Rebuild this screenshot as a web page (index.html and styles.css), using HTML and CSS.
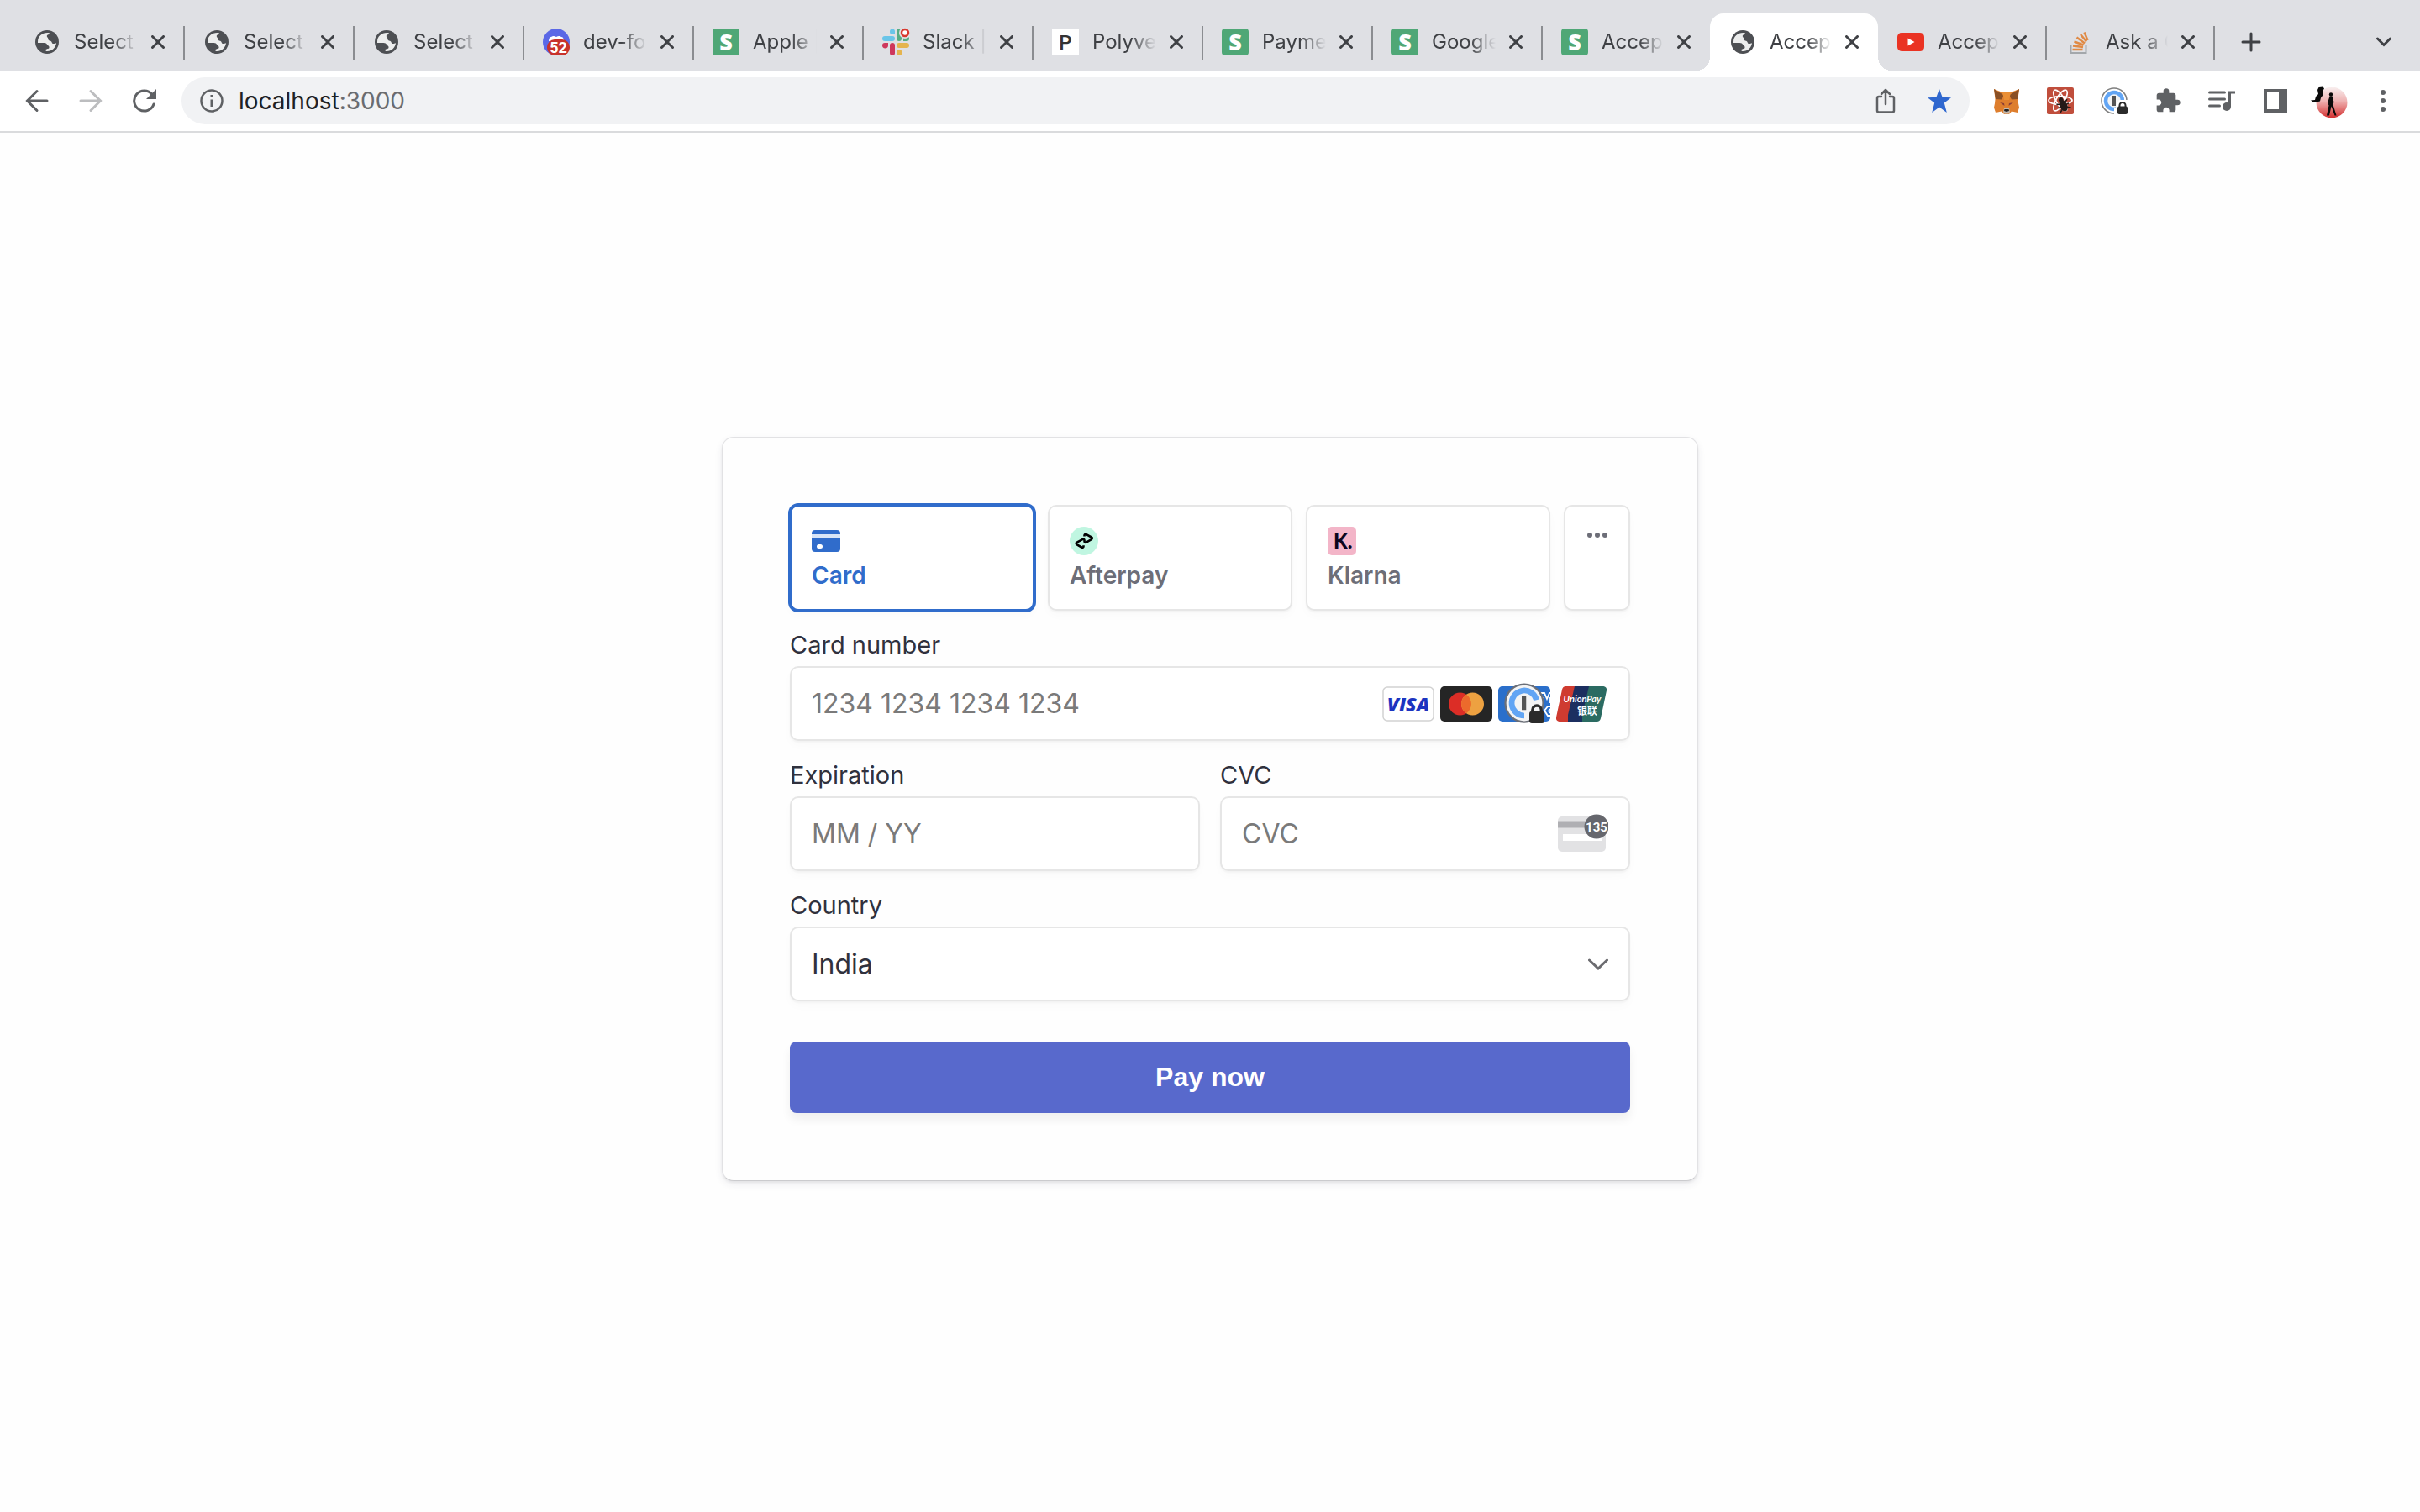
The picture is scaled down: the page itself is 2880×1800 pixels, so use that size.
FILE: index.html
```html
<!DOCTYPE html>
<html lang="en">
<head>
  <meta charset="UTF-8" />
  <meta name="viewport" content="width=device-width, initial-scale=1.0" />
  <title>Accept a payment</title>
  <link rel="stylesheet" href="styles.css">
</head>
<body>
  <!-- shared icons -->
  <svg class="defs" aria-hidden="true">
    <symbol id="globe" viewBox="0 0 28 28">
      <circle cx="14" cy="14" r="14" fill="#4d4f53"/>
      <path d="M3 13.500C3 7.500 8 3 14.500 3c1.500 0 2.500.3 2.500.8-.3 1.500-3 1.200-3.200 3.200-.1 1.500 1.500 1.700 1.500 3.200 0 1.300 1.200 2.200 2.700 2.600 2 .5 1.300 2.700 3 3.200 1.500.4 2.800-.8 4-.8-.6 5.500-5.200 9.800-10.800 9.800-1.300 0-2.200-.6-2-1.500.4-1.500 3.800-.6 4.300-2.700.5-2-1.500-2.500-2.300-3.800-.7-1.200-1.800-2-3.700-2H3z" fill="#eceded"/>
    </symbol>
    <symbol id="close" viewBox="0 0 16 16">
      <path d="M1.500 1.500l13 13M14.500 1.500l-13 13" stroke="#3f4145" stroke-width="3" stroke-linecap="round"/>
    </symbol>
    <symbol id="stripe" viewBox="0 0 32 32">
      <rect width="32" height="32" rx="4" fill="#4fa776"/>
      <text x="16" y="26" text-anchor="middle" font-family="Open Sans, sans-serif" font-weight="800" font-size="27" fill="#fff">S</text>
    </symbol>
    <symbol id="onepassword" viewBox="0 0 32 32">
      <circle cx="16" cy="16" r="15" fill="#fff" stroke="#7f7f7f" stroke-width="1.500"/>
      <circle cx="16" cy="16" r="10" fill="#f4f4f4" stroke="#62a5f4" stroke-width="4.500"/>
      <rect x="14" y="10" width="4" height="12" fill="#555"/>
      <path d="M16 24h2c0-3 1-5 3-7l1-2h10v17H16z" fill="#fff"/>
      <path d="M22.500 24v-2.500a3.500 3.500 0 0 1 7 0V24" fill="none" stroke="#2b2b2b" stroke-width="2"/>
      <rect x="20" y="22.500" width="12" height="9.500" rx="2" fill="#2b2b2b"/>
    </symbol>
    <!-- same mark without the white backing behind the lock, for use over a card logo -->
    <symbol id="onepassword-badge" viewBox="0 0 32 32">
      <circle cx="16" cy="16" r="15" fill="#f4f4f4" stroke="#6b6f78" stroke-width="1.500"/>
      <path d="M16 26a10 10 0 1 1 9.700-12.500" fill="none" stroke="#62a5f4" stroke-width="4.500"/>
      <rect x="14" y="10.500" width="3.500" height="11" fill="#555"/>
      <path d="M22.500 24v-2.500a3.500 3.500 0 0 1 7 0V24" fill="none" stroke="#2b2b2b" stroke-width="2.200"/>
      <rect x="20" y="22.500" width="12" height="9.500" rx="2" fill="#2b2b2b"/>
    </symbol>
  </svg>

  <header class="browser">
    <div class="tab-strip">
      <div class="tab">
        <svg class="favicon small"><use href="#globe"/></svg>
        <span class="tab-title">Select</span>
        <button class="tab-close" aria-label="Close tab"><svg><use href="#close"/></svg></button>
      </div>
      <div class="tab">
        <svg class="favicon small"><use href="#globe"/></svg>
        <span class="tab-title">Select</span>
        <button class="tab-close" aria-label="Close tab"><svg><use href="#close"/></svg></button>
      </div>
      <div class="tab">
        <svg class="favicon small"><use href="#globe"/></svg>
        <span class="tab-title">Select</span>
        <button class="tab-close" aria-label="Close tab"><svg><use href="#close"/></svg></button>
      </div>
      <div class="tab">
        <svg class="favicon" viewBox="0 0 32 32">
          <circle cx="16" cy="16" r="16" fill="#5b68e6"/>
          <path d="M7 15c0-3 1-5 3-5 2-1.500 4-1 6 0 2-1 4-1.500 6 0 2 0 3 2 3 5z" fill="#fff"/>
          <rect x="5" y="13" width="27" height="19" rx="9" fill="#c8322b"/>
          <text x="18.500" y="29" text-anchor="middle" font-family="Roboto, sans-serif" font-weight="700" font-size="18" fill="#fff">52</text>
        </svg>
        <span class="tab-title">dev-fo</span>
        <button class="tab-close" aria-label="Close tab"><svg><use href="#close"/></svg></button>
      </div>
      <div class="tab">
        <svg class="favicon"><use href="#stripe"/></svg>
        <span class="tab-title">Apple |</span>
        <button class="tab-close" aria-label="Close tab"><svg><use href="#close"/></svg></button>
      </div>
      <div class="tab">
        <svg class="favicon" viewBox="0 0 32 32">
          <g fill="#6ac5e8"><path d="M9 3.500a3 3 0 0 1 6 0V7h-3a3.300 3.300 0 0 1-3-3.500z"/><rect y="9" width="15" height="6" rx="3"/></g>
          <g fill="#56ad83"><rect x="17" width="6" height="15" rx="3"/><path d="M25 15v-3a3.300 3.300 0 0 1 7 0 3 3 0 0 1-3 3z"/></g>
          <g fill="#e5b44e"><rect x="17" y="17" width="15" height="6" rx="3"/><path d="M17 25h3a3.300 3.300 0 0 1 0 7 3 3 0 0 1-3-3z"/></g>
          <g fill="#ce375c"><rect x="9" y="17" width="6" height="15" rx="3"/><path d="M7 17v3a3.300 3.300 0 0 1-7 0 3 3 0 0 1 3-3z"/></g>
          <circle cx="27" cy="5" r="7" fill="#dfe0e4"/>
          <circle cx="27" cy="5" r="4" fill="#fff" stroke="#d8392f" stroke-width="2.500"/>
        </svg>
        <span class="tab-title">Slack |</span>
        <button class="tab-close" aria-label="Close tab"><svg><use href="#close"/></svg></button>
      </div>
      <div class="tab">
        <svg class="favicon" viewBox="0 0 32 32">
          <rect width="32" height="32" fill="#fff"/>
          <text x="16" y="25" text-anchor="middle" font-family="Roboto, sans-serif" font-weight="500" font-size="24" fill="#333">P</text>
        </svg>
        <span class="tab-title">Polyve</span>
        <button class="tab-close" aria-label="Close tab"><svg><use href="#close"/></svg></button>
      </div>
      <div class="tab">
        <svg class="favicon"><use href="#stripe"/></svg>
        <span class="tab-title">Payme</span>
        <button class="tab-close" aria-label="Close tab"><svg><use href="#close"/></svg></button>
      </div>
      <div class="tab">
        <svg class="favicon"><use href="#stripe"/></svg>
        <span class="tab-title">Google</span>
        <button class="tab-close" aria-label="Close tab"><svg><use href="#close"/></svg></button>
      </div>
      <div class="tab narrow no-line">
        <svg class="favicon"><use href="#stripe"/></svg>
        <span class="tab-title">Accep</span>
        <button class="tab-close" aria-label="Close tab"><svg><use href="#close"/></svg></button>
      </div>
      <div class="tab narrow active">
        <svg class="favicon small"><use href="#globe"/></svg>
        <span class="tab-title">Accep</span>
        <button class="tab-close" aria-label="Close tab"><svg><use href="#close"/></svg></button>
      </div>
      <div class="tab narrow">
        <svg class="favicon" viewBox="0 0 32 32">
          <rect y="5" width="32" height="22" rx="5" fill="#ea3323"/>
          <path d="M12.500 11.500v9l8-4.500z" fill="#fff"/>
        </svg>
        <span class="tab-title">Accep</span>
        <button class="tab-close" aria-label="Close tab"><svg><use href="#close"/></svg></button>
      </div>
      <div class="tab narrow">
        <svg class="favicon" viewBox="0 0 32 32" fill="none">
          <path d="M6.500 20v9h18v-9" stroke="#a3a7ab" stroke-width="2"/>
          <path d="M9.500 25h12M10 20.500l12 1.500M11.500 15.500l11 4M14.500 10.500l9.500 7M19 7l7 8.500M23.500 4.500l4 9.500" transform="translate(-1)" stroke="#e08a45" stroke-width="2.500"/>
        </svg>
        <span class="tab-title">Ask a Q</span>
        <button class="tab-close" aria-label="Close tab"><svg><use href="#close"/></svg></button>
      </div>
      <button class="new-tab" aria-label="New tab">
        <svg width="24" height="24" viewBox="0 0 24 24"><path d="M12 2v20M2 12h20" stroke="#3f4145" stroke-width="3" stroke-linecap="round"/></svg>
      </button>
      <button class="tab-search" aria-label="Search tabs">
        <svg width="18" height="12" viewBox="0 0 18 12" fill="none"><path d="M1.500 2L9 9.500 16.500 2" stroke="#3f4145" stroke-width="3" stroke-linecap="round"/></svg>
      </button>
    </div>

    <div class="toolbar">
      <div class="nav-buttons">
        <button aria-label="Back"><svg width="28" height="28" viewBox="0 0 28 28" fill="none" stroke="#5f6164" stroke-width="3" stroke-linecap="round"><path d="M26 14H3M14 2.500L2.500 14 14 25.500"/></svg></button>
        <button aria-label="Forward"><svg width="28" height="28" viewBox="0 0 28 28" fill="none" stroke="#bcbdbf" stroke-width="3" stroke-linecap="round"><path d="M2 14h23M14 2.500L25.500 14 14 25.500"/></svg></button>
        <button aria-label="Reload"><svg width="28" height="28" viewBox="0 0 28 28" fill="none"><path d="M23 6.500A12 12 0 1 0 25 18" stroke="#5f6164" stroke-width="3" stroke-linecap="round"/><path d="M28 0v12H16z" fill="#5f6164"/></svg></button>
      </div>
      <div class="omnibox">
        <svg width="28" height="28" viewBox="0 0 28 28"><circle cx="14" cy="14" r="12.500" fill="none" stroke="#5f6164" stroke-width="2.500"/><path d="M12.500 12.500h3V21h-3zM12.500 7h3v3h-3z" fill="#5f6164"/></svg>
        <span class="url">localhost<span class="port">:3000</span></span>
        <button aria-label="Share"><svg width="28" height="30" viewBox="0 0 28 30" fill="none" stroke="#5f6164" stroke-width="2.500" stroke-linecap="round" stroke-linejoin="round"><path d="M9 10H6a2 2 0 0 0-2 2v14.500a2 2 0 0 0 2 2h16a2 2 0 0 0 2-2V12a2 2 0 0 0-2-2h-3M14 19V2.500M9 7l5-5 5 5"/></svg></button>
        <button aria-label="Bookmark"><svg width="28" height="28" viewBox="0 0 28 28"><path d="M14 0l3.600 9.800L28 10.200l-8.200 6.400L22.800 28 14 21.500 5.200 28l3-11.400L0 10.200l10.400-.4z" fill="#2f67cf"/></svg></button>
      </div>
      <div class="extensions">
        <button aria-label="MetaMask"><svg width="32" height="32" viewBox="0 0 32 32">
          <path d="M1 2l10 4h10l10-4-1.500 12 .5 5 1 5-2 6-7-1.500-3 3.500h-6l-3-3.500L3 30l-2-6 1-5 .5-5z" fill="#de7e2d"/>
          <path d="M1 2l12 7.500-3 5-7-.5zM31 2L19 9.500l3 5 7-.5z" fill="#8a4f24"/>
          <path d="M11 6h10l-2 9h-6z" fill="#ea8f35"/>
          <path d="M8 18l5 1 .5 3zM24 18l-5 1-.500 3z" fill="#8c3f36"/>
          <path d="M13 25h6l1 4-1.500 2.500h-5L12 29z" fill="#c3b8ad"/>
          <path d="M13.500 26h5l.5 2-3 1-3-1z" fill="#222"/>
        </svg></button>
        <button aria-label="React Developer Tools"><svg width="32" height="32" viewBox="0 0 32 32">
          <rect width="32" height="32" rx="2" fill="#c04e3c"/>
          <g fill="none" stroke="#fff" stroke-width="1.700"><ellipse cx="16" cy="15.500" rx="14" ry="5"/><ellipse cx="16" cy="15.500" rx="14" ry="5" transform="rotate(60 16 15.500)"/><ellipse cx="16" cy="15.500" rx="14" ry="5" transform="rotate(120 16 15.500)"/></g>
          <g transform="rotate(-25 19 20)"><ellipse cx="19" cy="22" rx="4.500" ry="7" fill="#241a18"/><circle cx="19" cy="14.500" r="2.800" fill="#241a18"/><path d="M12 17l4 2h6l4-2M12 22h14M12 28l4-3h6l4 3" fill="none" stroke="#241a18" stroke-width="1.600"/></g>
        </svg></button>
        <button aria-label="1Password"><svg width="32" height="32"><use href="#onepassword"/></svg></button>
        <button aria-label="Extensions"><svg width="32" height="32" viewBox="0 0 24 24"><path d="M20.500 11H19V7c0-1.100-.9-2-2-2h-4V3.500a2.500 2.500 0 0 0-5 0V5H4c-1.100 0-1.990.9-1.990 2v3.800H3.500c1.490 0 2.700 1.210 2.700 2.700s-1.210 2.700-2.700 2.700H2V20c0 1.100.9 2 2 2h3.800v-1.500c0-1.490 1.210-2.700 2.700-2.700 1.490 0 2.700 1.210 2.700 2.700V22H17c1.100 0 2-.9 2-2v-4h1.500a2.500 2.500 0 0 0 0-5z" fill="#5f6164"/></svg></button>
        <button aria-label="Media controls"><svg width="32" height="32" viewBox="0 0 32 32" fill="none"><path d="M1.500 6h18M1.500 14h18M1.500 22h12" stroke="#5f6164" stroke-width="3" stroke-linecap="round"/><circle cx="22" cy="23" r="5" fill="#5f6164"/><path d="M25.500 23V6h6.500" stroke="#5f6164" stroke-width="3"/></svg></button>
        <button aria-label="Side panel"><svg width="32" height="32" viewBox="0 0 32 32"><path d="M2 2h28v28H2z" fill="#5f6164"/><path d="M6 6h14v20H6z" fill="#fff"/></svg></button>
        <button aria-label="Profile"><svg width="32" height="32" viewBox="0 0 32 32" class="avatar">
          <defs><linearGradient id="sky" x1="0" y1="0" x2="0" y2="1"><stop offset="0" stop-color="#f8f0f0"/><stop offset=".45" stop-color="#efb3b3"/><stop offset="1" stop-color="#d32f2f"/></linearGradient></defs>
          <circle cx="19" cy="18" r="18.500" fill="url(#sky)"/>
          <path d="M-6 15.500l5-.5 1-4 3-3-1-5 2-4 4-.5 2 3-2 3 1 4-3 4-1 4-4 1-5-.5z" fill="#0a0a0a"/>
          <circle cx="18" cy="8.500" r="2.200" fill="#0a0a0a"/>
          <path d="M16.500 10.500h3l2 7-1 3 4 13h-2l-4-11-2.500 11h-3l2.500-12-1.500-3z" fill="#0a0a0a"/>
        </svg></button>
        <button aria-label="Menu"><svg width="32" height="32" viewBox="0 0 32 32" fill="#5f6164"><circle cx="16" cy="6" r="3"/><circle cx="16" cy="16" r="3"/><circle cx="16" cy="26" r="3"/></svg></button>
      </div>
    </div>
  </header>

  <main class="page">
    <form class="payment-form">
      <div class="methods">
        <button type="button" class="method selected">
          <svg width="34" height="34" viewBox="0 0 34 34"><path d="M4 4h26a4 4 0 0 1 4 4H0a4 4 0 0 1 4-4z" fill="#306ccb"/><path d="M0 13h34v13a4 4 0 0 1-4 4H4a4 4 0 0 1-4-4z" fill="#306ccb"/><path d="M0 8h34v5H0z" fill="#d9e5f7"/><path d="M0 8h34v1H0z" fill="#306ccb"/><rect x="6" y="21" width="7" height="5" rx="2.500" fill="#fff"/></svg>
          <span>Card</span>
        </button>
        <button type="button" class="method">
          <svg width="34" height="34" viewBox="0 0 34 34"><circle cx="17" cy="17" r="17" fill="#c0f6e1"/><path d="M17.500 11.500v-1c0-1.500 1-2 2.300-1.300l6 3.300c1.400.8 1.400 1.900 0 2.700l-6 3.400c-1.300.7-2.300.1-2.300-1.300v-1c0-1.300-1-1.900-2.300-1.200l-6.500 3.600c-1.400.8-1.400 1.900 0 2.700l5.500 3.100c1.300.7 2.300.2 2.300-1.200v-1" fill="none" stroke="#000" stroke-width="2.600"/></svg>
          <span>Afterpay</span>
        </button>
        <button type="button" class="method">
          <svg width="34" height="34" viewBox="0 0 34 34"><rect width="34" height="34" rx="5" fill="#f3b5c8"/><text x="7" y="26" font-family="Lato, sans-serif" font-weight="900" font-size="24" fill="#0b051d">K.</text></svg>
          <span>Klarna</span>
        </button>
        <button type="button" class="method more" aria-label="More payment methods">
          <svg width="24" height="20" viewBox="0 0 24 20" fill="#6d6e78"><circle cx="3" cy="10" r="3"/><circle cx="12" cy="10" r="3"/><circle cx="21" cy="10" r="3"/></svg>
        </button>
      </div>

      <div class="field">
        <label for="number">Card number</label>
        <div class="control">
          <input type="text" id="number" placeholder="1234 1234 1234 1234">
          <div class="brands">
            <svg width="62" height="42" viewBox="0 0 62 42"><rect x="1" y="1" width="60" height="40" rx="5" fill="#fff" stroke="#d2d2d2" stroke-width="1.500"/><text x="31" y="30" text-anchor="middle" font-family="Open Sans, sans-serif" font-weight="800" font-style="italic" font-size="23" fill="#1c34c0">VISA</text></svg>
            <svg width="62" height="42" viewBox="0 0 62 42"><rect width="62" height="42" rx="5" fill="#252525"/><circle cx="23.500" cy="21" r="13.500" fill="#dc2d26"/><circle cx="38.500" cy="21" r="13.500" fill="#eda141"/><path d="M31 9.800a13.500 13.500 0 0 1 0 22.400 13.500 13.500 0 0 1 0-22.400z" fill="#ec6a2c"/></svg>
            <svg class="amex" width="62" height="42" viewBox="0 0 62 42"><rect width="62" height="42" rx="5" fill="#2a6fcb"/><path d="M50 20V8h5l3 7 3-7h1M54 20v-7M61 20v-7M62 24h-3l-4 5 4 6h3M62 27l-2 2.500 2 2.500" fill="none" stroke="#fff" stroke-width="1.800"/><use href="#onepassword-badge" x="7" y="-4" width="48" height="48"/></svg>
            <svg width="62" height="42" viewBox="0 0 62 42"><path d="M12 0h11l-9 42H4a4 4 0 0 1-4-5L7 4a5 5 0 0 1 5-4z" fill="#cf3b30"/><path d="M22 0h18l-9 42H14V34z" fill="#1c2f60"/><path d="M39 0h17a4 4 0 0 1 4 5l-7 33a5 5 0 0 1-5 4H31V34z" fill="#2b6b62"/><text x="31" y="19" text-anchor="middle" font-family="Lato, sans-serif" font-weight="700" font-style="italic" font-size="11" fill="#fff">UnionPay</text><text x="37" y="34" text-anchor="middle" font-family="Noto Sans CJK SC, sans-serif" font-weight="700" font-size="12" fill="#fff">银联</text></svg>
          </div>
        </div>
      </div>

      <div class="row">
        <div class="field">
          <label for="expiry">Expiration</label>
          <div class="control">
            <input type="text" id="expiry" placeholder="MM / YY">
          </div>
        </div>
        <div class="field">
          <label for="cvc">CVC</label>
          <div class="control">
            <input type="text" id="cvc" placeholder="CVC">
            <svg width="60" height="48" viewBox="0 0 60 48"><rect y="3" width="57" height="42" rx="5" fill="#e2e2e4"/><path d="M0 8.500h57v8H0z" fill="#afafb3"/><rect x="6" y="24" width="46" height="8" fill="#fff"/><circle cx="46" cy="15" r="14.500" fill="#66676d"/><text x="46" y="21" text-anchor="middle" font-family="Roboto, sans-serif" font-weight="700" font-size="15" fill="#fff">135</text></svg>
          </div>
        </div>
      </div>

      <div class="field">
        <label for="country">Country</label>
        <div class="control">
          <select id="country">
            <option>India</option>
          </select>
          <svg class="chevron" width="24" height="14" viewBox="0 0 24 14" fill="none"><path d="M1.500 2L12 12 22.500 2" stroke="#6b6b6f" stroke-width="3" stroke-linecap="round"/></svg>
        </div>
      </div>

      <button type="submit" class="pay">Pay now</button>
    </form>
  </main>
</body>
</html>
```
FILE: styles.css
```css
* {
  box-sizing: border-box;
}
body {
  margin: 0;
  min-height: 100vh;
  display: flex;
  flex-direction: column;
  background: #fefefe;
  font-family: Inter, 'Liberation Sans', sans-serif;
}
button {
  border: none;
  background: none;
  padding: 0;
  cursor: pointer;
}
svg {
  display: block;
  flex: none;
}
.defs {
  position: absolute;
  width: 0;
  height: 0;
}

/* browser chrome */
.browser {
  border-bottom: 2px solid #dadbdd;
  background: #fff;
}
.tab-strip {
  display: flex;
  align-items: flex-end;
  height: 84px;
  padding: 0 34px 0 17px;
  background: #dfe0e4;
}
.tab {
  position: relative;
  display: flex;
  align-items: center;
  width: 202px;
  height: 68px;
  padding: 0 23px;
}
.tab.narrow {
  width: 200px;
}
.tab::after {
  content: "";
  position: absolute;
  right: -1px;
  top: 15px;
  width: 2px;
  height: 40px;
  background: #8b8d91;
}
.tab.no-line::after {
  display: none;
}
.favicon {
  width: 32px;
  height: 32px;
  overflow: visible;
}
.favicon.small {
  padding: 2px;
}
.tab-title {
  flex: 1;
  min-width: 0;
  margin: 0 16px;
  overflow: hidden;
  white-space: nowrap;
  font-family: Inter, sans-serif;
  font-size: 24px;
  line-height: 32px;
  color: #3f4145;
  -webkit-mask-image: linear-gradient(to right, #000 60%, transparent);
  mask-image: linear-gradient(to right, #000 60%, transparent);
}
.tab-close svg {
  width: 16px;
  height: 16px;
}
.tab.active {
  background: #fff;
  border-radius: 16px 16px 0 0;
}
.tab.active::before,
.tab.active::after {
  content: "";
  position: absolute;
  top: auto;
  bottom: 0;
  width: 16px;
  height: 16px;
}
.tab.active::before {
  left: -16px;
  background: radial-gradient(circle at top left, transparent 16px, #fff 16px);
}
.tab.active::after {
  right: -16px;
  background: radial-gradient(circle at top right, transparent 16px, #fff 16px);
}
.new-tab {
  height: 68px;
  margin-left: 32px;
}
.tab-search {
  height: 68px;
  margin-left: auto;
}

.toolbar {
  display: flex;
  align-items: center;
  height: 72px;
  padding: 0 28px 0 30px;
}
.nav-buttons {
  display: flex;
  gap: 36px;
  margin-right: 30px;
}
.omnibox {
  flex: 1;
  display: flex;
  align-items: center;
  height: 56px;
  padding: 0 22px;
  border-radius: 28px;
  background: #f1f2f4;
}
.omnibox button {
  margin-left: 36px;
}
.url {
  flex: 1;
  margin-left: 18px;
  font-size: 28px;
  line-height: 36px;
  color: #202124;
}
.port {
  color: #6a6c70;
}
.extensions {
  display: flex;
  gap: 32px;
  margin-left: 28px;
}
.avatar {
  overflow: visible;
}

/* checkout */
.page {
  flex: 1;
  display: flex;
  align-items: center;
  justify-content: center;
  padding-bottom: 32px;
}
.payment-form {
  width: 100%;
  max-width: 1162px;
  padding: 80px;
  border: 1px solid #e2e2e4;
  border-bottom-color: #cbcbce;
  border-radius: 14px;
  background: #fefefe;
  box-shadow: 0 4px 10px rgba(50, 50, 93, 0.08), 0 2px 3px rgba(0, 0, 0, 0.06);
}
.methods {
  display: grid;
  grid-template-columns: 1fr 1fr 1fr 79px;
  gap: 16px;
}
.method {
  display: flex;
  flex-direction: column;
  align-items: flex-start;
  gap: 8px;
  padding: 24px;
  border: 2px solid #e6e6e6;
  border-radius: 10px;
  background: #fff;
  box-shadow: 0 2px 2px rgba(0, 0, 0, 0.03), 0 6px 12px rgba(0, 0, 0, 0.02);
  font-family: Inter, sans-serif;
  font-size: 28px;
  font-weight: 600;
  line-height: 32px;
  color: #6d6e78;
}
.method.selected {
  border-color: #306ccb;
  color: #306ccb;
  box-shadow: 0 0 0 2px #306ccb, 0 6px 12px rgba(0, 0, 0, 0.02);
}
.method.more {
  align-items: center;
}
.field {
  flex: 1;
  min-width: 0;
  margin-top: 24px;
}
.field label {
  display: block;
  margin-bottom: 8px;
  font-size: 29px;
  line-height: 34px;
  color: #30313d;
}
.row {
  display: flex;
  gap: 24px;
}
.control {
  position: relative;
  display: flex;
  align-items: center;
  height: 89px;
  padding: 0 24px;
  border: 2px solid #e6e6e6;
  border-radius: 10px;
  background: #fff;
  box-shadow: 0 2px 2px rgba(0, 0, 0, 0.03), 0 6px 12px rgba(0, 0, 0, 0.02);
}
.control input,
.control select {
  flex: 1;
  min-width: 0;
  height: 100%;
  padding: 0;
  border: none;
  outline: none;
  background: transparent;
  font-family: Inter, sans-serif;
  font-size: 32px;
  color: #30313d;
}
.control select {
  appearance: none;
}
.control input::placeholder {
  color: #7a7a7a;
}
.brands {
  display: flex;
  gap: 7px;
}
.amex {
  overflow: visible;
}
.chevron {
  position: absolute;
  right: 24px;
  pointer-events: none;
}
.pay {
  width: 100%;
  height: 85px;
  margin-top: 48px;
  border-radius: 8px;
  background: #5869cc;
  color: #fff;
  font-family: 'Liberation Sans', Arial, sans-serif;
  font-size: 32px;
  font-weight: 600;
  box-shadow: 0 8px 12px rgba(0, 0, 0, 0.06);
}
```
